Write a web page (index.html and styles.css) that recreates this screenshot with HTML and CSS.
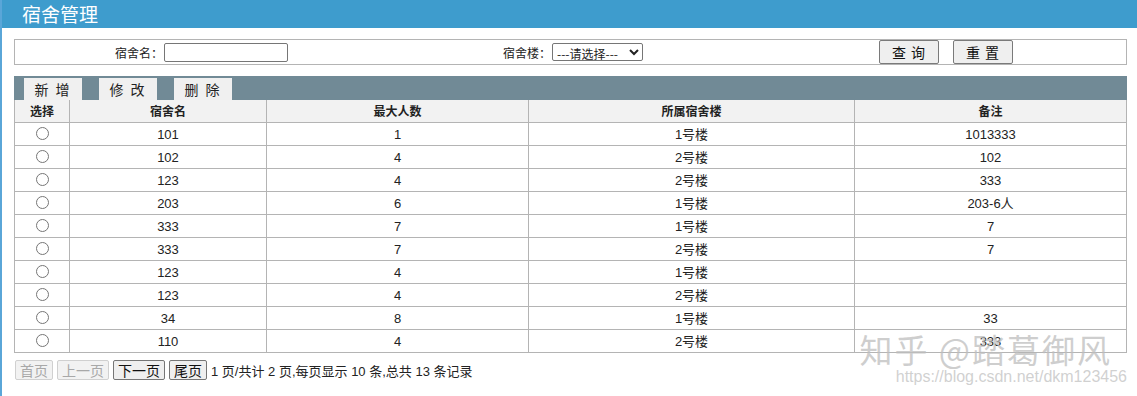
FILE: index.html
```html
<!DOCTYPE html>
<html lang="zh-CN">
<head>
    <meta charset="UTF-8">
    <title>宿舍管理</title>
    <link rel="stylesheet" href="styles.css">
</head>
<body>
    <div class="frame">
        <div class="title-bar">宿舍管理</div>

        <div class="main">
            <div class="search-box">
                <label class="search-label" for="dormName">宿舍名：</label>
                <div class="search-field"><input type="text" id="dormName"></div>
                <label class="search-label" for="building">宿舍楼：</label>
                <div class="search-field">
                    <select id="building">
                        <option>---请选择---</option>
                        <option>1号楼</option>
                        <option>2号楼</option>
                    </select>
                </div>
                <div class="search-actions">
                    <button class="btn">查 询</button>
                    <button class="btn">重 置</button>
                </div>
            </div>

            <div class="toolbar">
                <button class="tool-btn">新 增</button>
                <button class="tool-btn">修 改</button>
                <button class="tool-btn">删 除</button>
            </div>

            <table class="data-table">
                <colgroup>
                    <col class="col-select">
                    <col class="col-name">
                    <col class="col-max">
                    <col class="col-building">
                    <col>
                </colgroup>
                <thead>
                    <tr>
                        <th>选择</th>
                        <th>宿舍名</th>
                        <th>最大人数</th>
                        <th>所属宿舍楼</th>
                        <th>备注</th>
                    </tr>
                </thead>
                <tbody>
                    <tr><td><input type="radio" name="sel"></td><td>101</td><td>1</td><td>1号楼</td><td>1013333</td></tr>
                    <tr><td><input type="radio" name="sel"></td><td>102</td><td>4</td><td>2号楼</td><td>102</td></tr>
                    <tr><td><input type="radio" name="sel"></td><td>123</td><td>4</td><td>2号楼</td><td>333</td></tr>
                    <tr><td><input type="radio" name="sel"></td><td>203</td><td>6</td><td>1号楼</td><td>203-6人</td></tr>
                    <tr><td><input type="radio" name="sel"></td><td>333</td><td>7</td><td>1号楼</td><td>7</td></tr>
                    <tr><td><input type="radio" name="sel"></td><td>333</td><td>7</td><td>2号楼</td><td>7</td></tr>
                    <tr><td><input type="radio" name="sel"></td><td>123</td><td>4</td><td>1号楼</td><td></td></tr>
                    <tr><td><input type="radio" name="sel"></td><td>123</td><td>4</td><td>2号楼</td><td></td></tr>
                    <tr><td><input type="radio" name="sel"></td><td>34</td><td>8</td><td>1号楼</td><td>33</td></tr>
                    <tr><td><input type="radio" name="sel"></td><td>110</td><td>4</td><td>2号楼</td><td>333</td></tr>
                </tbody>
            </table>

            <div class="pager">
                <button class="page-btn" disabled>首页</button>
                <button class="page-btn" disabled>上一页</button>
                <button class="page-btn">下一页</button>
                <button class="page-btn">尾页</button>
                <span class="page-info">1 页/共计 2 页,每页显示 10 条,总共 13 条记录</span>
            </div>
        </div>

        <div class="watermark">
            <div class="wm-main">知乎 @踏葛御风</div>
            <div class="wm-url">https://blog.csdn.net/dkm123456</div>
        </div>
    </div>
</body>
</html>
```

FILE: styles.css
```css
:root {
    --title-bg: #3e9ccd;
    --toolbar-bg: #718a96;
    --border-color: #b4b4b4;
    --head-bg: #f2f2f2;
    --text-color: #222222;
}

body {
    margin: 0;
    font-family: 'Liberation Sans', 'Noto Sans CJK SC', sans-serif;
    color: var(--text-color);
    background-color: #ffffff;
}

.frame {
    position: relative;
    height: 396px;
    border-left: 2px solid #5aa6d8;
    overflow: hidden;
}

.title-bar {
    height: 28px;
    line-height: 27px;
    padding-left: 20px;
    background-color: var(--title-bg);
    color: #ffffff;
    font-family: 'Noto Sans CJK SC', sans-serif;
    font-size: 19px;
}

.main {
    padding: 11px 10px 0 12px;
}

/* search area */
.search-box {
    display: grid;
    grid-template-columns: 148px 237px 151px 327px auto;
    align-items: center;
    height: 24px;
    border: 1px solid var(--border-color);
    font-size: 12px;
}

.search-label {
    text-align: right;
    font-family: 'Noto Sans CJK SC', sans-serif;
}

.search-field input {
    width: 124px;
    height: 19px;
    box-sizing: border-box;
    border: 1px solid #767676;
    border-radius: 2px;
    padding: 0 2px;
    margin: 0 0 0 1px;
}

.search-field select {
    width: 91px;
    height: 18px;
    box-sizing: border-box;
    font-size: 12px;
    font-family: 'Noto Sans CJK SC', sans-serif;
    padding: 0;
    margin: 0 0 0 1px;
    border: 1px solid #767676;
    border-radius: 2px;
    background-color: #ffffff;
    color: #222222;
}

.search-actions {
    display: flex;
    gap: 14px;
    padding-left: 1px;
}

.btn {
    width: 60px;
    height: 24px;
    padding: 0;
    font-size: 14px;
    font-family: 'Noto Sans CJK SC', sans-serif;
    letter-spacing: 1px;
    background-color: #efefef;
    border: 1px solid #7a7a7a;
    border-radius: 2px;
    color: #111111;
}

/* toolbar */
.toolbar {
    display: flex;
    gap: 17px;
    height: 24px;
    margin-top: 11px;
    padding: 2px 0 0 10px;
    box-sizing: border-box;
    background-color: var(--toolbar-bg);
}

.tool-btn {
    width: 58px;
    height: 22px;
    padding: 0;
    border: none;
    background-color: #f0f0f0;
    font-size: 14px;
    font-family: 'Noto Sans CJK SC', sans-serif;
    letter-spacing: 2px;
    color: #222222;
}

/* data table */
.data-table {
    width: 100%;
    border-collapse: collapse;
    table-layout: fixed;
    font-size: 13px;
}

.col-select { width: 55px; }
.col-name { width: 197px; }
.col-max { width: 262px; }
.col-building { width: 326px; }

.data-table th,
.data-table td {
    height: 22px;
    padding: 0;
    border: 1px solid var(--border-color);
    text-align: center;
    vertical-align: middle;
    line-height: 22px;
}

.data-table th {
    background-color: var(--head-bg);
    font-weight: bold;
    font-family: 'Noto Sans CJK SC', sans-serif;
    font-size: 12px;
    border-top: none;
}

.data-table td {
    height: 21px;
    padding-top: 1px;
    line-height: 21px;
    font-family: 'Liberation Sans', 'Noto Sans CJK SC', sans-serif;
}

.data-table input[type="radio"] {
    width: 13px;
    height: 13px;
    margin: 0 0 5px 0;
    vertical-align: middle;
}

/* pagination */
.pager {
    display: flex;
    align-items: center;
    gap: 4px;
    margin-top: 7px;
    padding-left: 1px;
    font-size: 14px;
}

.page-btn {
    height: 20px;
    padding: 0 4px;
    font-size: 14px;
    font-family: 'Noto Sans CJK SC', sans-serif;
    line-height: 18px;
    background-color: #efefef;
    border: 1px solid #767676;
    border-radius: 2px;
    color: #111111;
}

.page-btn:disabled {
    color: #a8a8a8;
    border-color: #d0d0d0;
    background-color: #f2f2f2;
}

.page-info {
    font-family: 'Liberation Sans', 'Noto Sans CJK SC', sans-serif;
    font-size: 13px;
    color: #222222;
}

/* watermark overlay */
.watermark {
    position: absolute;
    right: 10px;
    top: 330px;
    text-align: right;
    pointer-events: none;
}

.wm-main {
    font-family: 'Noto Sans CJK SC', sans-serif;
    font-size: 33px;
    line-height: 38px;
    color: rgba(190, 190, 190, 0.75);
    letter-spacing: 2px;
    margin-right: 15px;
}

.wm-url {
    font-family: 'Liberation Sans', sans-serif;
    font-size: 16px;
    line-height: 18px;
    color: rgba(200, 200, 200, 0.85);
    margin-right: 0;
}
```
